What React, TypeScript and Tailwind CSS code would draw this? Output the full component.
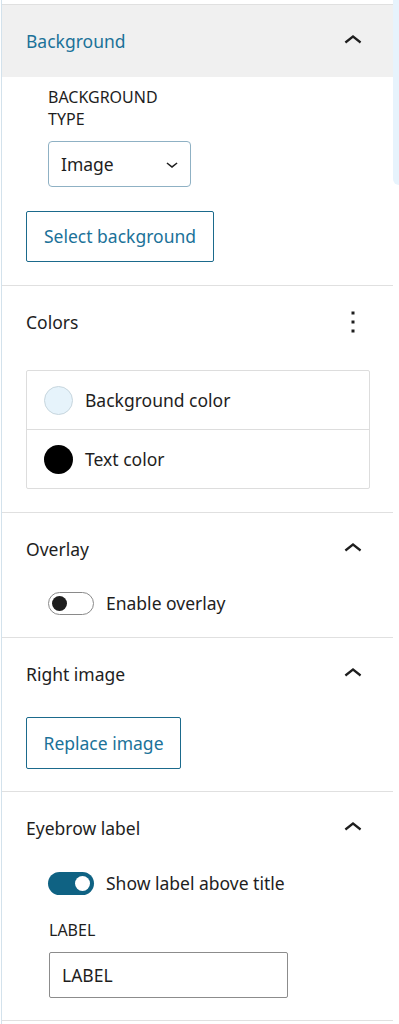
import React from 'react'

const font = { fontFamily: '"Noto Sans", "Open Sans", sans-serif' }

const ChevronUp = () => (
  <svg viewBox="0 0 24 24" className="w-[36px] h-[36px]" fill="#1e1e1e">
    <path d="M6.5 12.4L12 8l5.5 4.4-.9 1.2L12 10l-4.6 3.6-1-1.2z" />
  </svg>
)

const ChevronDown = () => (
  <svg viewBox="0 0 24 24" className="w-[24px] h-[24px]" fill="#1e1e1e">
    <path d="M17.5 11.6L12 16l-5.5-4.4.9-1.2L12 14l4.6-3.6 1 1.2z" />
  </svg>
)

const MoreVertical = () => (
  <svg viewBox="0 0 24 24" className="w-[36px] h-[36px]" fill="#1e1e1e">
    <path d="M13 19h-2v-2h2v2zm0-6h-2v-2h2v2zm0-6h-2V5h2v2z" />
  </svg>
)

const Header: React.FC<{ title: string; active?: boolean; icon?: React.ReactNode }> = ({
  title,
  active,
  icon,
}) => (
  <div
    className={`h-[72px] flex items-center justify-between pl-[24px] pr-[22px] ${
      active ? 'bg-[#f0f0f0]' : ''
    }`}
  >
    <span className={`text-[17.5px] ${active ? 'text-[#1b7299]' : 'text-[#1e1e1e]'}`}>{title}</span>
    {icon ?? <ChevronUp />}
  </div>
)

const Toggle: React.FC<{ on?: boolean; label: string }> = ({ on, label }) => (
  <div className="h-[23px] flex items-center ml-[22px]">
    {on ? (
      <div className="w-[46px] h-[23px] rounded-full bg-[#0f6283] flex items-center justify-end pr-[4px]">
        <div className="w-[15px] h-[15px] rounded-full bg-white" />
      </div>
    ) : (
      <div className="w-[46px] h-[23px] rounded-full bg-white border border-[#8a8a8a] flex items-center pl-[3px]">
        <div className="w-[15px] h-[15px] rounded-full bg-[#1e1e1e]" />
      </div>
    )}
    <span className="ml-[12px] text-[17.5px] leading-[23px] text-[#1e1e1e]">{label}</span>
  </div>
)

const OutlineButton: React.FC<{ label: string; width: string; height: string }> = ({
  label,
  width,
  height,
}) => (
  <button
    className={`${width} ${height} border border-[#1b6a8c] rounded-[2px] text-[17.5px] text-[#1b7299] bg-white`}
  >
    {label}
  </button>
)

export default function App() {
  return (
    <div className="w-[399px] min-h-[1024px] bg-white flex" style={font}>
      <div className="w-[1px] bg-white" />
      <div className="w-[392px] border-l border-[#d3e2ec] pt-[4px]">
        {/* Background */}
        <section className="border-t border-[#e0e0e0]">
          <Header title="Background" active />
          <div className="pl-[24px] pt-[9px] pb-[23px]">
            <div className="ml-[22px] w-[143px]">
              <div className="w-[125px] text-[16px] leading-[22px] text-[#1e1e1e] uppercase">Background type</div>
              <div className="mt-[11px] h-[46px] border border-[#8fb1c4] rounded-[4px] flex items-center justify-between pl-[12px] pr-[6px]">
                <span className="text-[17.5px] text-[#1e1e1e]">Image</span>
                <ChevronDown />
              </div>
            </div>
            <div className="mt-[24px]">
              <OutlineButton label="Select background" width="w-[188px]" height="h-[51px]" />
            </div>
          </div>
        </section>

        {/* Colors */}
        <section className="border-t border-[#e0e0e0]">
          <Header title="Colors" icon={<MoreVertical />} />
          <div className="pl-[24px] pt-[12px] pb-[23px]">
            <div className="w-[344px] border border-[#dddddd] rounded-[2px]">
              <div className="h-[59px] flex items-center pl-[17px] border-b border-[#dddddd]">
                <div className="w-[29px] h-[29px] rounded-full bg-[#e6f3fb] border border-[#c7d6de]" />
                <span className="ml-[12px] text-[17.5px] text-[#1e1e1e]">Background color</span>
              </div>
              <div className="h-[58px] flex items-center pl-[17px]">
                <div className="w-[29px] h-[29px] rounded-full bg-black" />
                <span className="ml-[12px] text-[17.5px] text-[#1e1e1e]">Text color</span>
              </div>
            </div>
          </div>
        </section>

        {/* Overlay */}
        <section className="border-t border-[#e0e0e0]">
          <Header title="Overlay" />
          <div className="pl-[24px] pt-[7px] pb-[22px]">
            <Toggle label="Enable overlay" />
          </div>
        </section>

        {/* Right image */}
        <section className="border-t border-[#e0e0e0]">
          <Header title="Right image" />
          <div className="pl-[24px] pt-[7px] pb-[22px]">
            <OutlineButton label="Replace image" width="w-[155px]" height="h-[52px]" />
          </div>
        </section>

        {/* Eyebrow label */}
        <section className="border-t border-b border-[#e0e0e0]">
          <Header title="Eyebrow label" />
          <div className="pl-[24px] pt-[8px] pb-[22px]">
            <Toggle on label="Show label above title" />
            <div className="ml-[23px] mt-[24px]">
              <div className="text-[16px] leading-[22px] text-[#1e1e1e] uppercase">Label</div>
              <div className="mt-[11px] w-[239px] h-[46px] border border-[#8c8c8c] rounded-[2px] flex items-center pl-[12px]">
                <span className="text-[17.5px] text-[#1e1e1e]">LABEL</span>
              </div>
            </div>
          </div>
        </section>
      </div>
      <div className="w-[6px] h-[185px] bg-[#e7f3fc] rounded-bl-[6px]" />
    </div>
  )
}
